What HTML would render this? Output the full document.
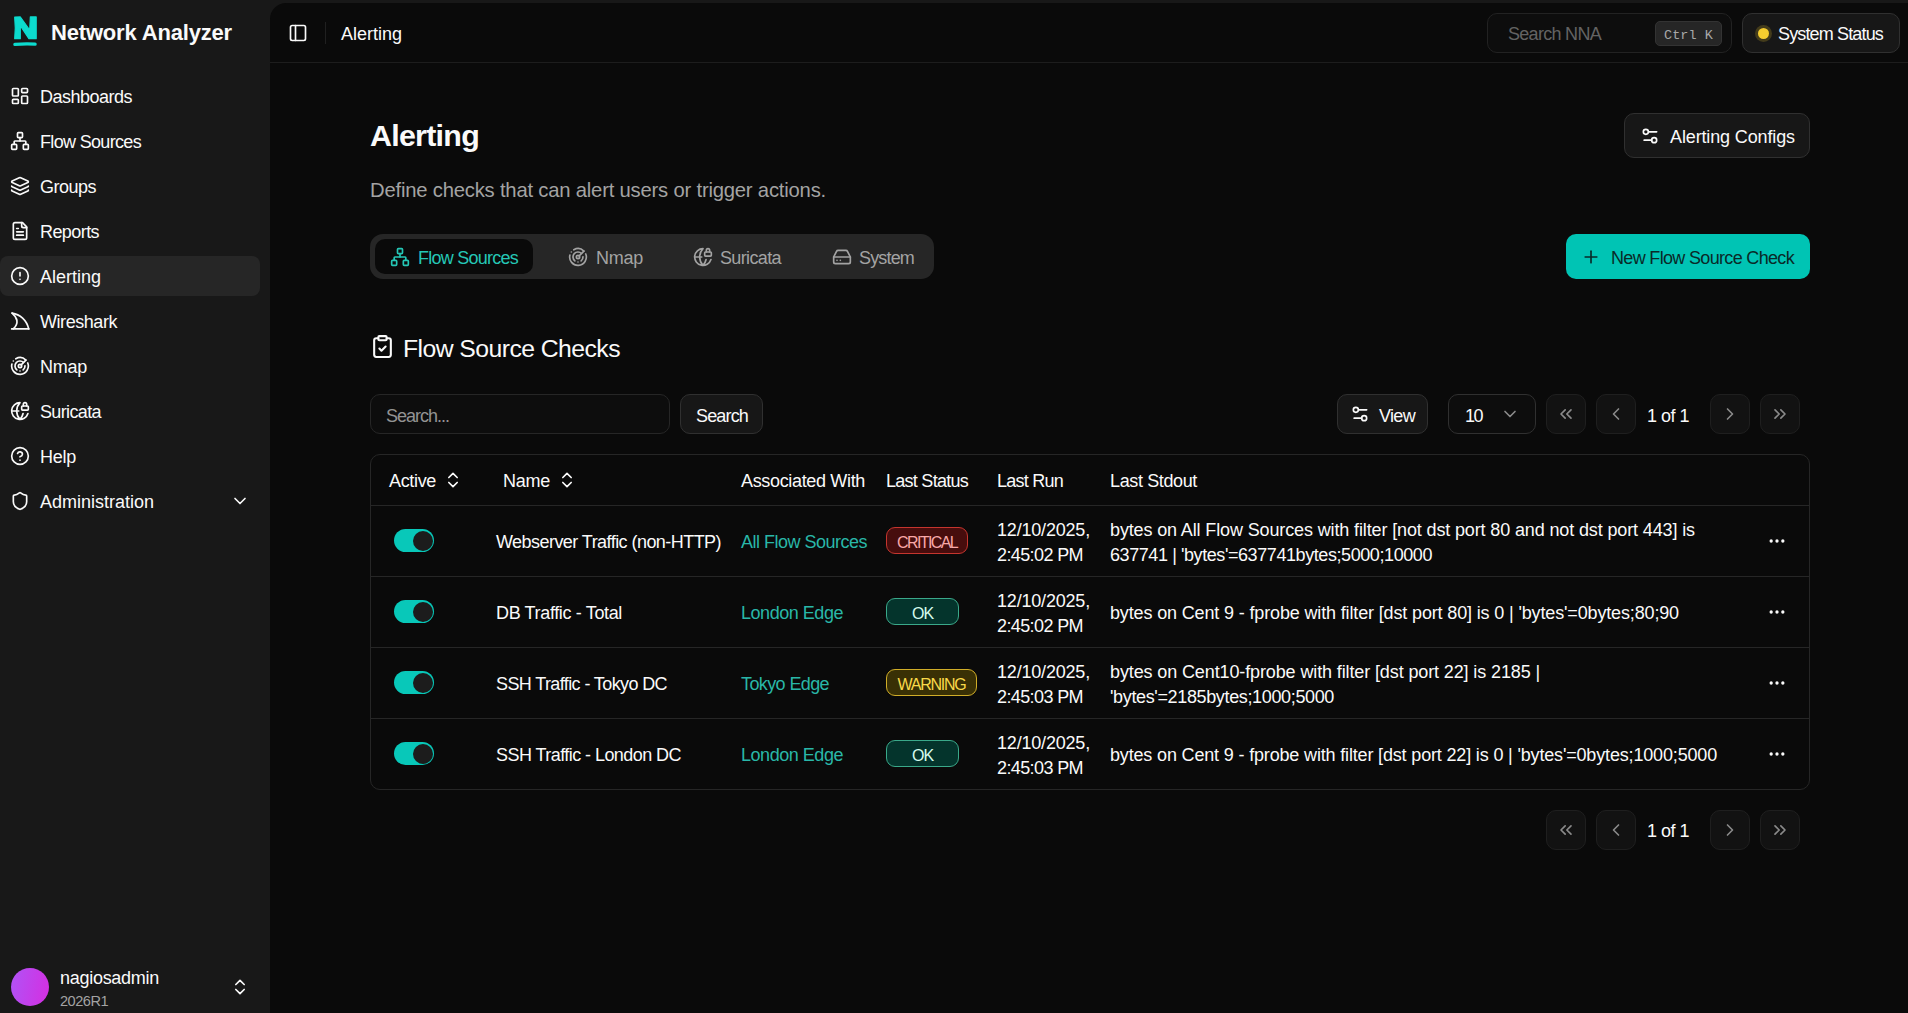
<!DOCTYPE html>
<html lang="en">
<head>
<meta charset="utf-8">
<title>Alerting - Network Analyzer</title>
<style>
*{box-sizing:border-box;margin:0;padding:0}
html,body{width:1908px;height:1013px;overflow:hidden;background:#181818}
body{font-family:"Liberation Sans",sans-serif;color:#fafafa;font-size:18px;position:relative;-webkit-font-smoothing:antialiased}
svg.i{fill:none;stroke:currentColor;stroke-width:2;stroke-linecap:round;stroke-linejoin:round;display:block;flex:none}
.t{display:inline-block;white-space:nowrap;transform:translateY(1px)}
.abs{position:absolute}
/* sidebar */
aside{position:absolute;left:0;top:0;width:270px;height:1013px;background:#181818}
.brand{position:absolute;left:13px;top:16px;display:flex;align-items:center}
.brand .t{position:absolute;left:38px;top:3px;font-weight:700;font-size:22px;line-height:26px}
nav a{position:absolute;left:0;width:260px;height:40px;border-radius:8px;display:flex;align-items:center;color:#fafafa;text-decoration:none}
nav a svg{position:absolute;left:10px;top:10px;width:20px;height:20px}
nav a .t{position:absolute;left:40px;top:9px;line-height:22px}
nav a.on{background:#262626}
.user{position:absolute;left:0;top:960px;width:270px;height:53px}
.avatar{position:absolute;left:11px;top:8px;width:38px;height:38px;border-radius:50%;background:linear-gradient(100deg,#b053f6 0%,#d52ee1 100%)}
/* main */
.main{position:absolute;left:270px;top:3px;width:1638px;height:1010px;background:#0a0a0a;border-top-left-radius:16px}
header{position:absolute;left:0;top:0;width:1638px;height:60px;border-bottom:1px solid #1d1d1d}
.btn{position:absolute;border:1px solid #303030;border-radius:10px;background:#171717;display:flex;align-items:center}
.pg{position:absolute;width:40px;height:40px;border:1px solid #1f1f1f;border-radius:10px;background:#121212;color:#8a8a8a}
.pg svg{position:absolute;left:9px;top:9px;width:20px;height:20px}
.tbl table{table-layout:fixed;width:1438px;border-collapse:collapse}
.tbl th{height:50px;text-align:left;font-weight:400;padding:0 0 0 8px;vertical-align:middle;white-space:nowrap;line-height:22px}
.tbl th .t,.tbl th svg{vertical-align:middle}
.tbl th svg.srt{display:inline-block;width:20px;height:20px;margin-left:7px}
.tbl td{height:71px;border-top:1px solid #262626;padding:0 0 0 8px;vertical-align:middle;line-height:25px;white-space:nowrap}
.tbl td.lk{color:#29b7a8}
.tbl td .t{vertical-align:top;transform:translateY(2px)}
.tbl td .bd .t{transform:translateY(2px)}
.sw{display:block;width:40px;height:23px;border-radius:12px;background:#08c8b9;position:relative;top:0px}
.sw:after{content:"";position:absolute;right:1.500px;top:1.500px;width:20px;height:20px;border-radius:50%;background:#1c1c1c}
.bd{display:inline-block;height:27px;border-radius:9px;border:1px solid;padding:0 10px;font-size:16px;line-height:25px;vertical-align:middle}
.bd .t{vertical-align:top}
.bd.crit{background:#470d0d;border-color:#c5352e;color:#f9a8a8}
.bd.ok{background:#04342c;border-color:#3aa98a;color:#d6fbee;padding:0 25px}
.bd.warn{padding:0 10.500px;background:#393005;border-color:#d0ad28;color:#f9d949}
.more svg{width:20px;height:20px;margin-left:14px}

</style>
</head>
<body>
<aside>
  <div class="brand">
    <svg width="26" height="31" viewBox="0 0 26 31"><path d="M1.700 1.100 L7.200 0.900 L16.700 14 L17.350 0.900 L23.200 0.900 L23.200 22.700 L15.900 22.700 L7.300 9.600 L7.300 22.700 L1.700 22.700 L2.300 12 Z" fill="#0cdbce" stroke="#0cdbce" stroke-width="1.200" stroke-linejoin="round"/><path d="M1.900 28.300 Q12 27.700 22.100 28.100" stroke="#0cdbce" stroke-width="3.300" fill="none" stroke-linecap="round"/></svg>
    <span class="t" style="letter-spacing:-0.176px">Network Analyzer</span>
  </div>
  <nav>
    <a style="top:76px"><svg class="i" viewBox="0 0 24 24"><rect width="7" height="9" x="3" y="3" rx="1"/><rect width="7" height="5" x="14" y="3" rx="1"/><rect width="7" height="9" x="14" y="12" rx="1"/><rect width="7" height="5" x="3" y="16" rx="1"/></svg><span class="t" style="letter-spacing:-0.506px">Dashboards</span></a>
    <a style="top:121px"><svg class="i" viewBox="0 0 24 24"><rect x="16" y="16" width="6" height="6" rx="1"/><rect x="2" y="16" width="6" height="6" rx="1"/><rect x="9" y="2" width="6" height="6" rx="1"/><path d="M5 16v-3a1 1 0 0 1 1-1h12a1 1 0 0 1 1 1v3"/><path d="M12 12V8"/></svg><span class="t" style="letter-spacing:-0.671px">Flow Sources</span></a>
    <a style="top:166px"><svg class="i" viewBox="0 0 24 24"><path d="M12.83 2.18a2 2 0 0 0-1.66 0L2.6 6.08a1 1 0 0 0 0 1.83l8.58 3.91a2 2 0 0 0 1.66 0l8.58-3.9a1 1 0 0 0 0-1.83z"/><path d="M2 12a1 1 0 0 0 .58.91l8.6 3.91a2 2 0 0 0 1.65 0l8.58-3.9A1 1 0 0 0 22 12"/><path d="M2 17a1 1 0 0 0 .58.91l8.6 3.91a2 2 0 0 0 1.65 0l8.58-3.9A1 1 0 0 0 22 17"/></svg><span class="t" style="letter-spacing:-0.505px">Groups</span></a>
    <a style="top:211px"><svg class="i" viewBox="0 0 24 24"><path d="M15 2H6a2 2 0 0 0-2 2v16a2 2 0 0 0 2 2h12a2 2 0 0 0 2-2V7Z"/><path d="M14 2v4a2 2 0 0 0 2 2h4"/><path d="M10 9H8"/><path d="M16 13H8"/><path d="M16 17H8"/></svg><span class="t" style="letter-spacing:-0.576px">Reports</span></a>
    <a class="on" style="top:256px"><svg class="i" viewBox="0 0 24 24"><circle cx="12" cy="12" r="10"/><line x1="12" x2="12" y1="8" y2="12"/><line x1="12" x2="12.01" y1="16" y2="16"/></svg><span class="t" style="letter-spacing:-0.004px">Alerting</span></a>
    <a style="top:301px"><svg class="i" viewBox="0 0 24 24"><path d="M2 21.500h20.500"/><path d="M2.500 2.500C12 4 20 11 22.500 21.500"/><path d="M2.500 2.500C9 8 11 15 4 21.500"/></svg><span class="t" style="letter-spacing:-0.446px">Wireshark</span></a>
    <a style="top:346px"><svg class="i" viewBox="0 0 24 24"><path d="M19.070 4.930A10 10 0 0 0 6.990 3.340"/><path d="M4 6h.01"/><path d="M2.290 9.620A10 10 0 1 0 21.310 8.350"/><path d="M16.240 7.760A6 6 0 1 0 8.230 16.670"/><path d="M12 18h.01"/><path d="M17.990 11.660A6 6 0 0 1 15.770 16.670"/><circle cx="12" cy="12" r="2"/><path d="m13.410 10.590 5.660-5.660"/></svg><span class="t" style="letter-spacing:-0.254px">Nmap</span></a>
    <a style="top:391px"><svg class="i" viewBox="0 0 24 24"><path d="M15.686 15A14.500 14.500 0 0 1 12 22a14.500 14.500 0 0 1 0-20 10 10 0 1 0 9.542 13"/><path d="M2 12h8.500"/><path d="M20 6V4a2 2 0 1 0-4 0v2"/><rect width="8" height="5" x="14" y="6" rx="1"/></svg><span class="t" style="letter-spacing:-0.631px">Suricata</span></a>
    <a style="top:436px"><svg class="i" viewBox="0 0 24 24"><circle cx="12" cy="12" r="10"/><path d="M9.090 9a3 3 0 0 1 5.830 1c0 2-3 3-3 3"/><path d="M12 17h.01"/></svg><span class="t" style="letter-spacing:-0.258px">Help</span></a>
    <a style="top:481px"><svg class="i" viewBox="0 0 24 24"><path d="M20 13c0 5-3.500 7.500-7.660 8.950a1 1 0 0 1-.670-.010C7.500 20.500 4 18 4 13V6a1 1 0 0 1 1-1c2 0 4.500-1.200 6.240-2.720a1.170 1.170 0 0 1 1.520 0C14.510 3.810 17 5 19 5a1 1 0 0 1 1 1z"/></svg><span class="t" style="letter-spacing:-0.003px">Administration</span><svg class="i" viewBox="0 0 24 24" style="left:230px"><path d="m6 9 6 6 6-6"/></svg></a>
  </nav>
  <div class="user">
    <div class="avatar"></div>
    <span class="t abs" style="left:60px;top:6px;line-height:22px;letter-spacing:-0.280px">nagiosadmin</span>
    <span class="t abs" style="left:60px;top:31px;font-size:14.600px;line-height:18px;color:#a3a3a3;letter-spacing:-0.521px">2026R1</span>
    <svg class="i abs" viewBox="0 0 24 24" style="left:230px;top:17px;width:20px;height:20px"><path d="m7 15 5 5 5-5"/><path d="m7 9 5-5 5 5"/></svg>
  </div>
</aside>
<div class="main">
<header>
  <svg class="i abs" viewBox="0 0 24 24" style="left:18px;top:20px;width:20px;height:20px"><rect width="18" height="18" x="3" y="3" rx="2"/><path d="M9 3v18"/></svg>
  <div class="abs" style="left:55px;top:19px;width:1px;height:22px;background:#202020"></div>
  <span class="t abs" style="left:71px;top:19px;line-height:22px;letter-spacing:-0.004px">Alerting</span>
  <div class="btn" style="left:1217px;top:10px;width:245px;height:40px;background:#0d0d0d;border-color:#222">
    <span class="t abs" style="left:20px;top:8px;line-height:22px;color:#636363;letter-spacing:-0.705px">Search NNA</span>
    <span class="abs" style="left:167px;top:7px;width:67px;height:25px;border-radius:5px;background:#262626;border:1px solid #333"><span class="t abs" style="left:8px;top:4.500px;font-family:'Liberation Mono',monospace;font-size:13.500px;line-height:16px;color:#a8a8a8;letter-spacing:0.065px">Ctrl K</span></span>
  </div>
  <div class="btn" style="left:1472px;top:10px;width:158px;height:40px">
    <span class="abs" style="left:15px;top:14px;width:11px;height:11px;border-radius:50%;background:#f5cd2f;box-shadow:0 0 0 3px rgba(245,205,47,.2)"></span>
    <span class="t abs" style="left:35px;top:8px;line-height:22px;letter-spacing:-0.850px">System Status</span>
  </div>
</header>
<main>
  <h1 class="t abs" style="left:100px;top:111px;font-size:30.400px;line-height:40px;font-weight:700;letter-spacing:-0.727px">Alerting</h1>
  <p class="t abs" style="left:100px;top:173px;font-size:20.250px;line-height:26px;color:#a3a3a3;letter-spacing:-0.206px">Define checks that can alert users or trigger actions.</p>
  <div class="btn" style="left:1354px;top:110px;width:186px;height:45px">
    <svg class="i abs" viewBox="0 0 24 24" style="left:15px;top:12px;width:20px;height:20px"><path d="M20 7h-9"/><path d="M14 17H5"/><circle cx="17" cy="17" r="3"/><circle cx="7" cy="7" r="3"/></svg>
    <span class="t abs" style="left:45px;top:11px;line-height:22px;letter-spacing:-0.130px">Alerting Configs</span>
  </div>
  <div class="abs" style="left:100px;top:231px;width:564px;height:45px;border-radius:13px;background:#262626;color:#a3a3a3">
    <div class="abs" style="left:5px;top:5px;width:158px;height:35px;border-radius:10px;background:#0a0a0a;color:#25c7b6">
      <svg class="i abs" viewBox="0 0 24 24" style="left:15px;top:8px;width:20px;height:20px"><rect x="16" y="16" width="6" height="6" rx="1"/><rect x="2" y="16" width="6" height="6" rx="1"/><rect x="9" y="2" width="6" height="6" rx="1"/><path d="M5 16v-3a1 1 0 0 1 1-1h12a1 1 0 0 1 1 1v3"/><path d="M12 12V8"/></svg>
      <span class="t abs" style="left:43px;top:7px;line-height:22px;letter-spacing:-0.754px">Flow Sources</span>
    </div>
    <svg class="i abs" viewBox="0 0 24 24" style="left:198px;top:13px;width:20px;height:20px"><path d="M19.070 4.930A10 10 0 0 0 6.990 3.340"/><path d="M4 6h.01"/><path d="M2.290 9.620A10 10 0 1 0 21.310 8.350"/><path d="M16.240 7.760A6 6 0 1 0 8.230 16.670"/><path d="M12 18h.01"/><path d="M17.990 11.660A6 6 0 0 1 15.770 16.670"/><circle cx="12" cy="12" r="2"/><path d="m13.410 10.590 5.660-5.660"/></svg>
    <span class="t abs" style="left:226px;top:12px;line-height:22px;letter-spacing:-0.254px">Nmap</span>
    <svg class="i abs" viewBox="0 0 24 24" style="left:323px;top:13px;width:20px;height:20px"><path d="M15.686 15A14.500 14.500 0 0 1 12 22a14.500 14.500 0 0 1 0-20 10 10 0 1 0 9.542 13"/><path d="M2 12h8.500"/><path d="M20 6V4a2 2 0 1 0-4 0v2"/><rect width="8" height="5" x="14" y="6" rx="1"/></svg>
    <span class="t abs" style="left:350px;top:12px;line-height:22px;letter-spacing:-0.631px">Suricata</span>
    <svg class="i abs" viewBox="0 0 24 24" style="left:462px;top:13px;width:20px;height:20px"><line x1="22" x2="2" y1="12" y2="12"/><path d="M5.450 5.110 2 12v6a2 2 0 0 0 2 2h16a2 2 0 0 0 2-2v-6l-3.450-6.890A2 2 0 0 0 16.760 4H7.240a2 2 0 0 0-1.790 1.110z"/><line x1="6" x2="6.010" y1="16" y2="16"/><line x1="10" x2="10.010" y1="16" y2="16"/></svg>
    <span class="t abs" style="left:489px;top:12px;line-height:22px;letter-spacing:-0.836px">System</span>
  </div>
  <div class="abs" style="left:1296px;top:231px;width:244px;height:45px;border-radius:10px;background:#00c4b4;color:#0a2a28">
    <svg class="i abs" viewBox="0 0 24 24" style="left:15px;top:13px;width:20px;height:20px"><path d="M5 12h14"/><path d="M12 5v14"/></svg>
    <span class="t abs" style="left:45px;top:12px;line-height:22px;letter-spacing:-0.670px">New Flow Source Check</span>
  </div>
  <svg class="i abs" viewBox="0 0 24 24" style="left:100px;top:331px;width:25px;height:25px"><rect width="8" height="4" x="8" y="2" rx="1" ry="1"/><path d="M16 4h2a2 2 0 0 1 2 2v14a2 2 0 0 1-2 2H6a2 2 0 0 1-2-2V6a2 2 0 0 1 2-2h2"/><path d="m9 14 2 2 4-4"/></svg>
  <h2 class="t abs" style="left:133px;top:329px;font-size:24.750px;line-height:32px;font-weight:400;letter-spacing:-0.554px">Flow Source Checks</h2>
  <div class="btn" style="left:100px;top:391px;width:300px;height:40px;background:#0d0d0d;border-color:#262626"><span class="t abs" style="left:15px;top:9px;line-height:22px;color:#939393;letter-spacing:-1.005px">Search...</span></div>
  <div class="btn" style="left:410px;top:391px;width:83px;height:40px"><span class="t abs" style="left:15px;top:9px;line-height:22px;letter-spacing:-0.841px">Search</span></div>
  <div class="btn" style="left:1067px;top:391px;width:91px;height:40px">
    <svg class="i abs" viewBox="0 0 24 24" style="left:12px;top:9px;width:20px;height:20px"><path d="M20 7h-9"/><path d="M14 17H5"/><circle cx="17" cy="17" r="3"/><circle cx="7" cy="7" r="3"/></svg>
    <span class="t abs" style="left:41px;top:9px;line-height:22px;letter-spacing:-0.676px">View</span>
  </div>
  <div class="btn" style="left:1178px;top:391px;width:88px;height:40px;background:#0d0d0d">
    <span class="t abs" style="left:16px;top:9px;line-height:22px;letter-spacing:-1.516px">10</span>
    <svg class="i abs" viewBox="0 0 24 24" style="left:51px;top:9px;width:20px;height:20px;color:#8a8a8a"><path d="m6 9 6 6 6-6"/></svg>
  </div>
  <div class="pg" style="left:1276px;top:391px"><svg class="i" viewBox="0 0 24 24"><path d="m11 17-5-5 5-5"/><path d="m18 17-5-5 5-5"/></svg></div>
  <div class="pg" style="left:1326px;top:391px"><svg class="i" viewBox="0 0 24 24"><path d="m15 18-6-6 6-6"/></svg></div>
  <span class="t abs" style="left:1377px;top:401px;line-height:22px;letter-spacing:-0.508px">1 of 1</span>
  <div class="pg" style="left:1440px;top:391px"><svg class="i" viewBox="0 0 24 24"><path d="m9 18 6-6-6-6"/></svg></div>
  <div class="pg" style="left:1490px;top:391px"><svg class="i" viewBox="0 0 24 24"><path d="m6 17 5-5-5-5"/><path d="m13 17 5-5-5-5"/></svg></div>
    <div class="abs tbl" style="left:100px;top:451px;width:1440px;height:336px;border:1px solid #262626;border-radius:10px;overflow:hidden">
  <table>
    <colgroup><col style="width:117px"><col style="width:245px"><col style="width:145px"><col style="width:111px"><col style="width:113px"><col style="width:643px"><col style="width:64px"></colgroup>
    <thead><tr>
      <th style="padding-left:18px"><span class="t" style="letter-spacing:-0.339px">Active</span><svg class="i srt" viewBox="0 0 24 24"><path d="m7 15 5 5 5-5"/><path d="m7 9 5-5 5 5"/></svg></th>
      <th style="padding-left:15px"><span class="t" style="letter-spacing:-0.254px">Name</span><svg class="i srt" viewBox="0 0 24 24"><path d="m7 15 5 5 5-5"/><path d="m7 9 5-5 5 5"/></svg></th>
      <th><span class="t" style="letter-spacing:-0.338px">Associated With</span></th>
      <th><span class="t" style="letter-spacing:-0.733px">Last Status</span></th>
      <th><span class="t" style="letter-spacing:-0.756px">Last Run</span></th>
      <th><span class="t" style="letter-spacing:-0.371px">Last Stdout</span></th>
      <th></th>
    </tr></thead>
    <tbody>
    <tr>
      <td style="padding-left:23px"><span class="sw"></span></td>
      <td><span class="t" style="letter-spacing:-0.550px">Webserver Traffic (non-HTTP)</span></td>
      <td class="lk"><span class="t" style="letter-spacing:-0.503px">All Flow Sources</span></td>
      <td><span class="bd crit"><span class="t" style="letter-spacing:-1.613px">CRITICAL</span></span></td>
      <td><span class="t" style="letter-spacing:-0.190px">12/10/2025,</span><br><span class="t" style="letter-spacing:-0.606px">2:45:02 PM</span></td>
      <td><span class="t" style="letter-spacing:-0.131px">bytes on All Flow Sources with filter [not dst port 80 and not dst port 443] is</span><br><span class="t" style="letter-spacing:-0.419px">637741 | 'bytes'=637741bytes;5000;10000</span></td>
      <td class="more"><svg class="i" viewBox="0 0 24 24"><circle cx="12" cy="12" r="1"/><circle cx="19" cy="12" r="1"/><circle cx="5" cy="12" r="1"/></svg></td>
    </tr>
    <tr>
      <td style="padding-left:23px"><span class="sw"></span></td>
      <td><span class="t" style="letter-spacing:-0.355px">DB Traffic - Total</span></td>
      <td class="lk"><span class="t" style="letter-spacing:-0.464px">London Edge</span></td>
      <td><span class="bd ok"><span class="t" style="letter-spacing:-1.062px">OK</span></span></td>
      <td><span class="t" style="letter-spacing:-0.190px">12/10/2025,</span><br><span class="t" style="letter-spacing:-0.606px">2:45:02 PM</span></td>
      <td><span class="t" style="letter-spacing:-0.146px">bytes on Cent 9 - fprobe with filter [dst port 80] is 0 | 'bytes'=0bytes;80;90</span></td>
      <td class="more"><svg class="i" viewBox="0 0 24 24"><circle cx="12" cy="12" r="1"/><circle cx="19" cy="12" r="1"/><circle cx="5" cy="12" r="1"/></svg></td>
    </tr>
    <tr>
      <td style="padding-left:23px"><span class="sw"></span></td>
      <td><span class="t" style="letter-spacing:-0.609px">SSH Traffic - Tokyo DC</span></td>
      <td class="lk"><span class="t" style="letter-spacing:-0.606px">Tokyo Edge</span></td>
      <td><span class="bd warn"><span class="t" style="letter-spacing:-1.248px">WARNING</span></span></td>
      <td><span class="t" style="letter-spacing:-0.190px">12/10/2025,</span><br><span class="t" style="letter-spacing:-0.606px">2:45:03 PM</span></td>
      <td><span class="t" style="letter-spacing:-0.119px">bytes on Cent10-fprobe with filter [dst port 22] is 2185 |</span><br><span class="t" style="letter-spacing:-0.354px">'bytes'=2185bytes;1000;5000</span></td>
      <td class="more"><svg class="i" viewBox="0 0 24 24"><circle cx="12" cy="12" r="1"/><circle cx="19" cy="12" r="1"/><circle cx="5" cy="12" r="1"/></svg></td>
    </tr>
    <tr>
      <td style="padding-left:23px"><span class="sw"></span></td>
      <td><span class="t" style="letter-spacing:-0.555px">SSH Traffic - London DC</span></td>
      <td class="lk"><span class="t" style="letter-spacing:-0.464px">London Edge</span></td>
      <td><span class="bd ok"><span class="t" style="letter-spacing:-1.062px">OK</span></span></td>
      <td><span class="t" style="letter-spacing:-0.190px">12/10/2025,</span><br><span class="t" style="letter-spacing:-0.606px">2:45:03 PM</span></td>
      <td><span class="t" style="letter-spacing:-0.163px">bytes on Cent 9 - fprobe with filter [dst port 22] is 0 | 'bytes'=0bytes;1000;5000</span></td>
      <td class="more"><svg class="i" viewBox="0 0 24 24"><circle cx="12" cy="12" r="1"/><circle cx="19" cy="12" r="1"/><circle cx="5" cy="12" r="1"/></svg></td>
    </tr>
    </tbody>
  </table>
  </div>

  <div class="pg" style="left:1276px;top:807px"><svg class="i" viewBox="0 0 24 24"><path d="m11 17-5-5 5-5"/><path d="m18 17-5-5 5-5"/></svg></div>
  <div class="pg" style="left:1326px;top:807px"><svg class="i" viewBox="0 0 24 24"><path d="m15 18-6-6 6-6"/></svg></div>
  <span class="t abs" style="left:1377px;top:816px;line-height:22px;letter-spacing:-0.508px">1 of 1</span>
  <div class="pg" style="left:1440px;top:807px"><svg class="i" viewBox="0 0 24 24"><path d="m9 18 6-6-6-6"/></svg></div>
  <div class="pg" style="left:1490px;top:807px"><svg class="i" viewBox="0 0 24 24"><path d="m6 17 5-5-5-5"/><path d="m13 17 5-5-5-5"/></svg></div>
</main>
</div>
</body>
</html>
